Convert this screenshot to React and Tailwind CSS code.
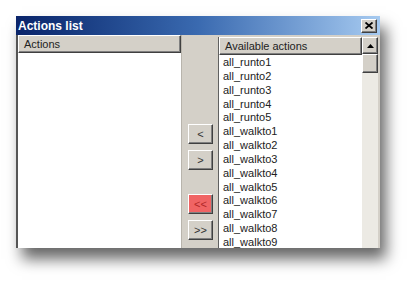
import React from "react";

const items = [
  "all_runto1",
  "all_runto2",
  "all_runto3",
  "all_runto4",
  "all_runto5",
  "all_walkto1",
  "all_walkto2",
  "all_walkto3",
  "all_walkto4",
  "all_walkto5",
  "all_walkto6",
  "all_walkto7",
  "all_walkto8",
  "all_walkto9",
];

const raised =
  "border border-t-white border-l-white border-b-[#404040] border-r-[#404040] shadow-[inset_-1px_-1px_0_#808080]";

const MoveButton = ({ label, active }) => (
  <button
    type="button"
    className={`w-[25px] h-[20px] flex items-center justify-center text-[11px] leading-none ${raised} ${
      active ? "bg-[#f06464] text-[#b02828]" : "bg-[#d4d0c8] text-[#333]"
    }`}
  >
    {label}
  </button>
);

const ColumnHeader = ({ children }) => (
  <div
    className={`h-[18px] shrink-0 bg-[#d4d0c8] flex items-center px-[5px] text-[11px] text-[#222] ${raised}`}
  >
    {children}
  </div>
);

const App = () => {
  return (
    <div
      className="w-[416px] h-[282px] bg-white pl-[16px] pt-[16px]"
      style={{ fontFamily: '"Liberation Sans", Arial, sans-serif' }}
    >
      <div className="w-[364px] h-[232px] flex flex-col bg-[#d4d0c8] shadow-[6px_11px_14px_rgba(0,0,0,0.6)]">
        {/* title bar */}
        <div className="h-[19px] shrink-0 flex items-center justify-between pl-[2px] pr-[3px] bg-gradient-to-r from-[#0a246a] via-[#3a6ab0] to-[#a6caf0]">
          <span className="text-white font-bold text-[12px] leading-none">
            Actions list
          </span>
          <div
            className={`w-[16px] h-[14px] bg-[#d4d0c8] flex items-center justify-center ${raised}`}
          >
            <svg width="8" height="7" viewBox="0 0 8 7">
              <path d="M0.5 0.5 L7.5 6.5 M7.5 0.5 L0.5 6.5" stroke="#000" strokeWidth="1.8" />
            </svg>
          </div>
        </div>

        <div className="flex-1 flex min-h-0">
          {/* left list */}
          <div className="w-[166px] flex flex-col bg-white border-l-2 border-l-[#555] border-r border-r-[#b8b4ac]">
            <ColumnHeader>Actions</ColumnHeader>
          </div>

          {/* middle buttons */}
          <div className="w-[36px] flex flex-col items-center pt-[89px] pl-[1px]">
            <MoveButton label="<" />
            <div className="h-[6px]" />
            <MoveButton label=">" />
            <div className="h-[24px]" />
            <MoveButton label="<<" active />
            <div className="h-[6px]" />
            <MoveButton label=">>" />
          </div>

          {/* right list */}
          <div className="flex-1 flex mt-[2px] mr-[2px] border-l border-l-[#606060]">
            <div className="flex-1 flex flex-col bg-white overflow-hidden">
              <ColumnHeader>Available actions</ColumnHeader>
              <div className="pl-[4px] pt-[1px]">
                {items.map((item) => (
                  <div
                    key={item}
                    className="h-[13.85px] leading-[13.85px] text-[11px] text-[#222] whitespace-nowrap"
                  >
                    {item}
                  </div>
                ))}
              </div>
            </div>
            <div className="w-[16px] flex flex-col bg-[#eceae4]">
              <div
                className={`h-[17px] bg-[#d4d0c8] flex items-center justify-center ${raised}`}
              >
                <svg width="7" height="4" viewBox="0 0 7 4">
                  <path d="M3.5 0 L7 4 L0 4 Z" fill="#000" />
                </svg>
              </div>
              <div className={`h-[19px] bg-[#d4d0c8] ${raised}`} />
            </div>
          </div>
        </div>
      </div>
    </div>
  );
};

export default App;
